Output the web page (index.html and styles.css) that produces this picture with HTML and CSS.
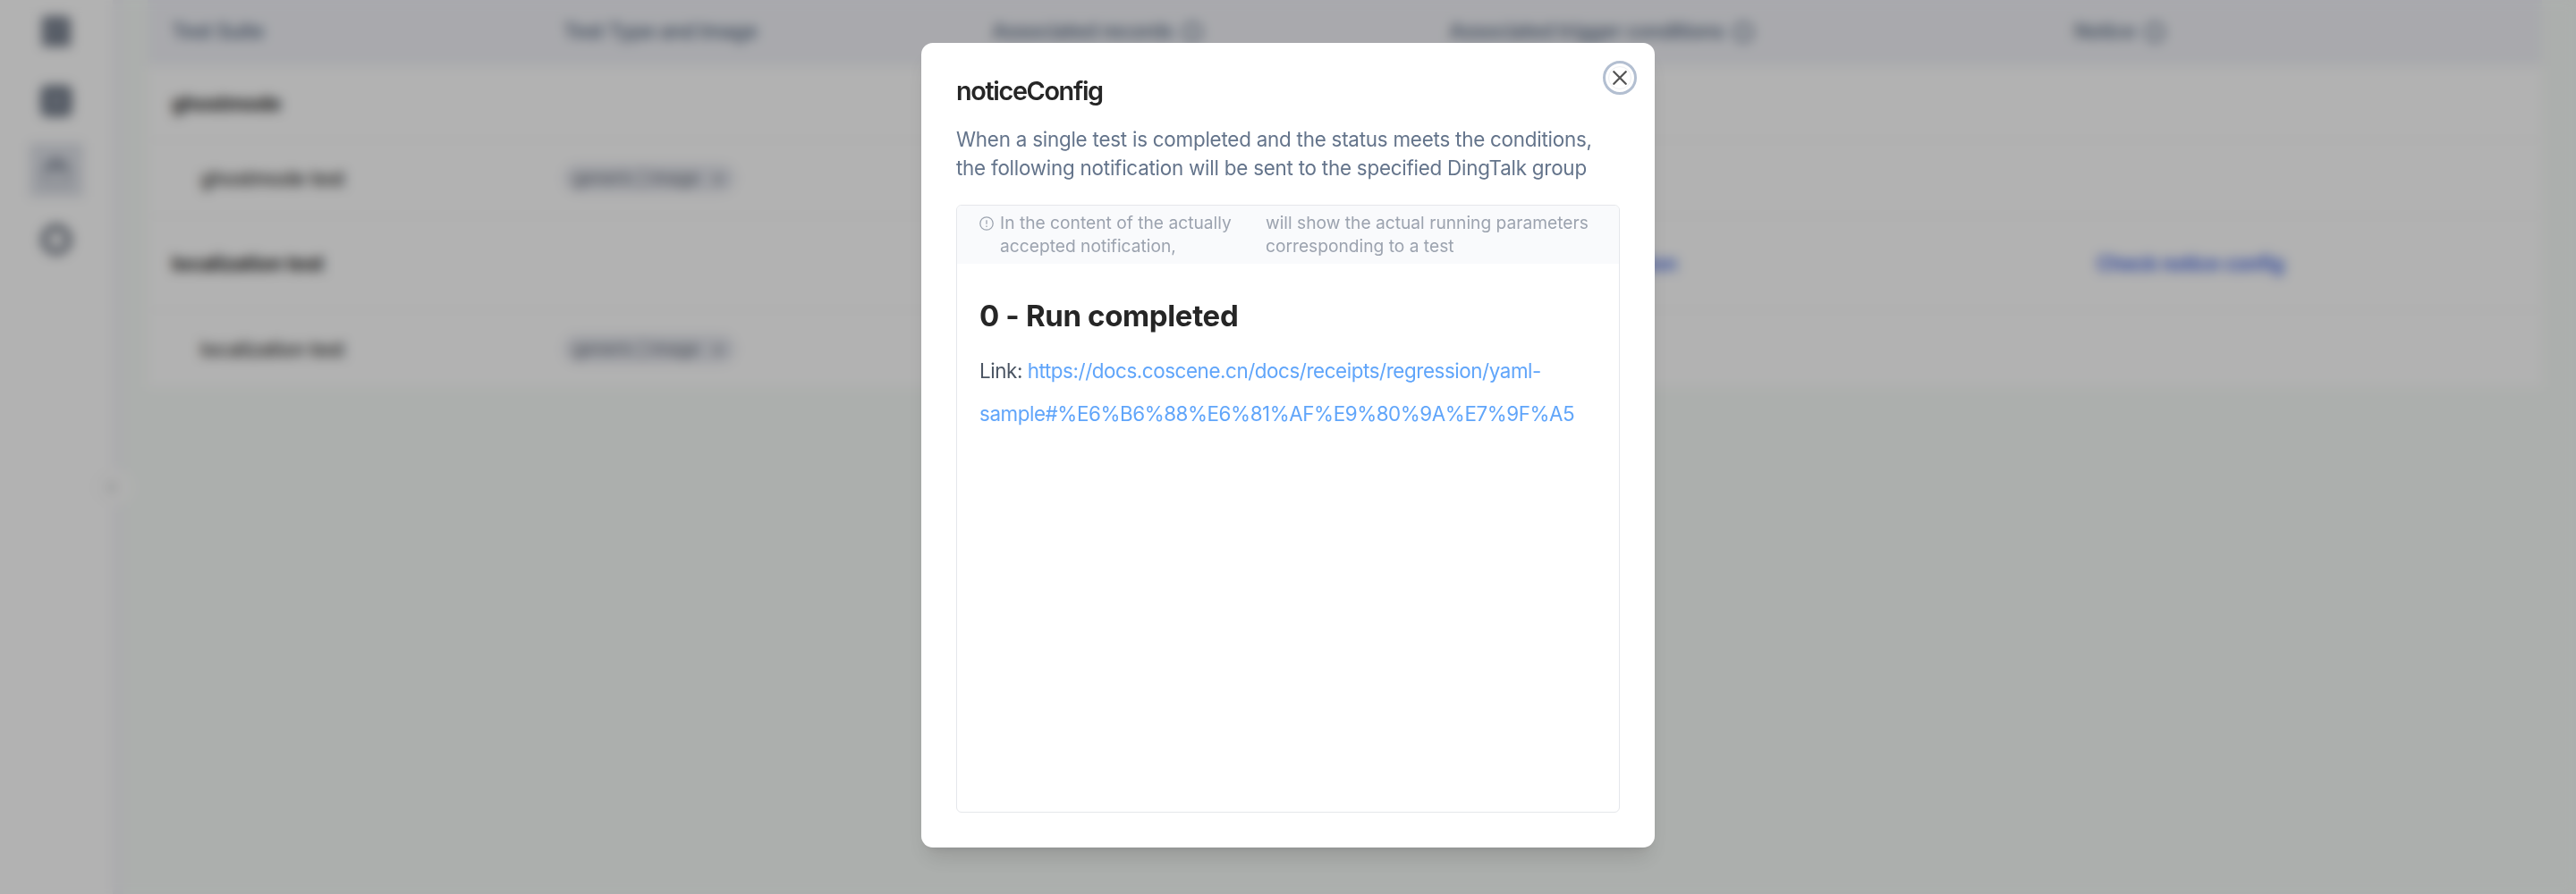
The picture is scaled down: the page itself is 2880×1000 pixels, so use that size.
FILE: index.html
```html
<!DOCTYPE html>
<html lang="en">
<head>
<meta charset="utf-8">
<title>noticeConfig</title>
<link rel="stylesheet" href="styles.css">
</head>
<body>
<div class="app">
  <aside class="sidebar">
    <div class="nav-item"><svg viewBox="0 0 36 36"><path d="M4 1h26l4 4v30H2V3z" fill="#7a8290"/><path d="M11 21l12-10" stroke="#9aa3b0" stroke-width="3"/></svg></div>
    <div class="nav-item"><svg viewBox="0 0 36 36"><rect x="6" y="6" width="24" height="24" rx="1" fill="#98a0ad" stroke="#727b89" stroke-width="11"/></svg></div>
    <div class="nav-item nav-active"><svg viewBox="0 0 36 36"><path d="M3 20a15 16 0 0 1 30 0z" fill="#9fa6b3"/><path d="M4 20v13h28V20" fill="none" stroke="#bcc1ca" stroke-width="4"/></svg></div>
    <div class="nav-item"><svg viewBox="0 0 36 36"><circle cx="18" cy="18" r="13.5" fill="none" stroke="#7a818d" stroke-width="8"/></svg></div>
    <div class="collapse"><svg viewBox="0 0 20 20"><path d="M12 5l-5 5 5 5" fill="none" stroke="#c8cccc" stroke-width="4"/></svg></div>
  </aside>
  <main class="content">
    <div class="table">
      <div class="row head">
        <div class="cell">Test Suite</div>
        <div class="cell">Test Type and Image</div>
        <div class="cell">Associated records <i class="help"></i></div>
        <div class="cell">Associated trigger conditions <i class="help"></i></div>
        <div class="cell">Notice <i class="help"></i></div>
      </div>
      <div class="row group r1"><div class="cell">ghostmode</div></div>
      <div class="row r2"><div class="cell child">ghostmode test</div><div class="cell"><span class="pill">generic | image <b>×</b></span></div></div>
      <div class="row group r3"><div class="cell">localization test</div><div class="cell"></div><div class="cell"></div><div class="cell link trigger">Check trigger condition</div><div class="cell link">Check notice config</div></div>
      <div class="row r4"><div class="cell child">localization test</div><div class="cell"><span class="pill">generic | image <b>×</b></span></div></div>
    </div>
  </main>
</div>
<div class="overlay">
  <section class="modal">
    <button class="close" aria-label="Close"><svg viewBox="0 0 16 16"><path d="M1.3 1.3l13.4 13.4M14.7 1.3L1.3 14.7"/></svg></button>
    <h2 class="title">noticeConfig</h2>
    <p class="desc">When a single test is completed and the status meets the conditions,<br>the following notification will be sent to the specified DingTalk group</p>
    <div class="preview">
      <div class="hint">
        <svg class="info" viewBox="0 0 16 16"><circle cx="8" cy="8" r="7.2"/><path d="M8 4.2v4.6M8 10.4v1.5"/></svg>
        <p class="hint-first">In the content of the actually<br>accepted notification,</p>
        <p>will show the actual running parameters<br>corresponding to a test</p>
      </div>
      <div class="message">
        <h1>0 - Run completed</h1>
        <p>Link: <a>https://docs.coscene.cn/docs/receipts/regression/yaml-</a><br><a>sample#%E6%B6%88%E6%81%AF%E9%80%9A%E7%9F%A5</a></p>
      </div>
    </div>
  </section>
</div>
</body>
</html>
```
FILE: styles.css
```css
* { box-sizing: border-box; }
body { margin: 0; height: 1000px; overflow: hidden; font-family: Inter, "Liberation Sans", sans-serif; font-size: 22.4px; background: #f7fbf8; }
h1, h2, p { margin: 0; }

.app { display: flex; height: 1000px; }
.sidebar { position: relative; width: 126px; flex: none; background: #fff; display: flex; flex-direction: column; align-items: center; padding-top: 5px; gap: 17.5px; }
.nav-item { width: 60px; height: 60px; display: grid; place-items: center; }
.nav-item svg { width: 36px; height: 36px; }
.nav-active { background: #dfe2e9; }
.collapse { position: absolute; left: 104px; top: 523px; width: 44px; height: 44px; border-radius: 50%; background: #fdfdfd; display: grid; place-items: center; z-index: 1; }
.collapse svg { width: 20px; }
.content { flex: 1; padding: 0 38px 0 40px; border-left: 12px solid #f4f5f9; }

.table { background: #fff; margin-left: -13px; height: 433px; letter-spacing: -.4px; }
.row { display: grid; grid-template-columns: 438px 479px 511px 699px 1fr; align-items: center; padding-left: 27px; border-bottom: 1px solid #f1f2f2; }
.head { height: 74px; padding-bottom: 6px; background: #f2f3f8; border: 0; font-weight: 600; color: #64748b; }
.cell { white-space: nowrap; }
.help { display: inline-block; width: 22px; height: 22px; border: 3px solid #64748b; border-radius: 50%; vertical-align: -4px; margin-left: 5px; }
.group { font-weight: 700; color: #262626; letter-spacing: -.2px; }
.child { padding-left: 32px; color: #333; font-weight: 500; }
.r1 { height: 83px; }
.r2 { height: 85px; }
.r3 { height: 105px; }
.r4 { height: 86px; border: 0; }
.link { color: #3b5fe0; font-weight: 600; padding-left: 25px; letter-spacing: -.4px; }
.trigger { padding-left: 9px; }
.pill { display: inline-block; background: #e5e7ee; border-radius: 15px; padding: 0 13px 0 11px; line-height: 31px; font-size: 19.2px; letter-spacing: 0; color: #666c77; }
.pill b { margin-left: 9px; font-weight: 500; }

.overlay { position: fixed; z-index: 2; inset: 0; padding: 48px 0 0 1030px; background: rgba(0, 0, 0, .3); backdrop-filter: blur(6.4px); }
.modal { position: relative; width: 820px; height: 900px; padding: 35px 39px 39px; background: #fff; border-radius: 13px; box-shadow: 0 16px 24px -5px rgba(0, 0, 0, .12), 0 6px 10px -6px rgba(0, 0, 0, .12); display: flex; flex-direction: column; }
.close { position: absolute; right: 20px; top: 20px; width: 38px; height: 38px; border: 3px solid #b3bfd1; border-radius: 50%; background: #fff; padding: 0; display: grid; place-items: center; }
.close::before { content: ""; position: absolute; inset: 3px; border: 1px solid #eef0f3; border-radius: 50%; }
.close svg { width: 16px; height: 16px; fill: none; stroke: #555; stroke-width: 2.3; stroke-linecap: round; }
.title { font-size: 28.8px; line-height: 38px; font-weight: 600; letter-spacing: -1.35px; color: #262626; }
.desc { margin-top: 19px; line-height: 32px; letter-spacing: -.23px; color: #64748b; white-space: nowrap; }
.preview { flex: 1; margin-top: 25px; border: 1px solid #e5e7eb; border-radius: 6px; overflow: hidden; }
.hint { display: flex; height: 65px; padding: 7px 0 0 25px; background: #f9fafc; color: #9ca3af; font-size: 19.2px; line-height: 25.6px; white-space: nowrap; }
.info { width: 16px; height: 16px; margin: 5px 7px 0 0; fill: none; stroke: #9ca3af; stroke-width: 1.3; }
.hint-first { width: 297px; }
.message { padding: 33px 25px; color: #4b5563; line-height: 48px; letter-spacing: -.43px; white-space: nowrap; }
.message h1 { font-size: 33px; line-height: 50px; color: #262626; margin-bottom: 13px; font-weight: 700; letter-spacing: -.35px; }
.message a { color: #60a5fa; }
```
